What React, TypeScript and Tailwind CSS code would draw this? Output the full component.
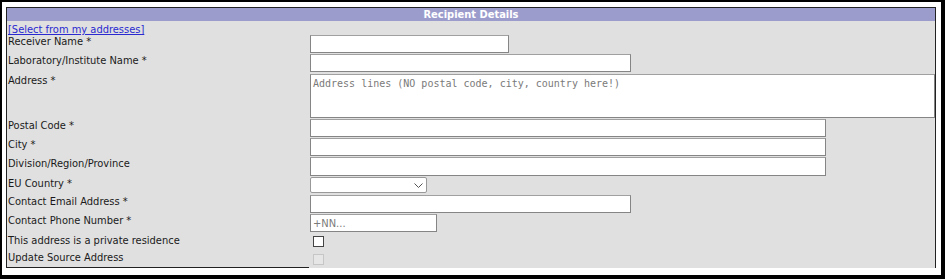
import React from "react";

const LABEL = "pl-px text-[11px] leading-[13px] text-[#1a1a1a] font-['DejaVu_Sans_Condensed','Liberation_Sans',Tahoma,sans-serif]";
const INPUT = "block h-[18px] border border-[#858585] border-t-[#a0a0a0] bg-white outline-none";

function Row({ label, height, children }: { label: string; height: string; children: React.ReactNode }) {
  return (
    <div className={`flex items-start ${height}`}>
      <div className={`w-[303px] shrink-0 ${LABEL}`}>{label}</div>
      <div className="flex-1">{children}</div>
    </div>
  );
}

export default function App() {
  return (
    <div className="w-[945px] h-[279px] bg-white border-black border-t-2 border-l-2 border-r-4 border-b-4 pt-[5px] pl-[4px]">
      <div className="w-[930px] border-t border-l border-r border-[#222]">
        {/* Header */}
        <div className="h-[13px] bg-[#9c9ccc] text-center text-[11px] leading-[13px] font-bold text-white font-['DejaVu_Sans_Condensed','Liberation_Sans',Tahoma,sans-serif]">
          Recipient Details
        </div>

        {/* Body */}
        <div className="bg-[#e0e0e0]">
          <div className="h-[14px] pl-px pt-px text-[11px] leading-[13px]">
            <a
              href="#"
              className="text-[#2a2ad0] underline font-['DejaVu_Sans_Condensed','Liberation_Sans',Tahoma,sans-serif]"
            >
              [Select from my addresses]
            </a>
          </div>

          <Row label="Receiver Name *" height="h-[19px]">
            <input className={`${INPUT} w-[199px]`} />
          </Row>
          <Row label="Laboratory/Institute Name *" height="h-[20px]">
            <input className={`${INPUT} w-[321px]`} />
          </Row>
          <Row label="Address *" height="h-[45px]">
            <textarea
              className="block h-[44px] w-[625px] resize-none border border-[#858585] border-t-[#a0a0a0] bg-white px-[2px] pt-[2px] text-[10px] leading-[13px] outline-none font-['DejaVu_Sans_Mono',monospace] placeholder:text-[#7a7a7a]"
              placeholder="Address lines (NO postal code, city, country here!)"
            />
          </Row>
          <Row label="Postal Code *" height="h-[19px]">
            <input className={`${INPUT} w-[516px]`} />
          </Row>
          <Row label="City *" height="h-[19px]">
            <input className={`${INPUT} w-[516px]`} />
          </Row>
          <Row label="Division/Region/Province" height="h-[20px]">
            <input className={`${INPUT} h-[19px] w-[516px]`} />
          </Row>
          <Row label="EU Country *" height="h-[18px]">
            <div className="relative h-[16px] w-[117px] rounded-[2px] border border-[#999] bg-white">
              <svg className="absolute left-[103px] top-[5px]" width="9" height="5" viewBox="0 0 9 5" fill="none">
                <path d="M0.5 0.5L4.5 4.5L8.5 0.5" stroke="#555" strokeWidth="1" />
              </svg>
            </div>
          </Row>
          <Row label="Contact Email Address *" height="h-[19px]">
            <input className={`${INPUT} w-[321px]`} />
          </Row>
          <Row label="Contact Phone Number *" height="h-[19px]">
            <input
              className={`${INPUT} w-[127px] px-[2px] text-[11px] font-['DejaVu_Sans_Condensed','Liberation_Sans',Tahoma,sans-serif] placeholder:text-[#7a7a7a]`}
              placeholder="+NN..."
            />
          </Row>
          <div className="flex h-[18px] items-start pt-px">
            <div className={`w-[303px] shrink-0 ${LABEL}`}>This address is a private residence</div>
            <span className="ml-[3px] mt-[2px] block h-[11px] w-[11px] border border-[#444] bg-white" />
          </div>
          <div className="flex h-[17px] items-start">
            <div className={`w-[303px] shrink-0 ${LABEL}`}>Update Source Address</div>
            <span className="ml-[3px] mt-[3px] block h-[11px] w-[11px] border border-[#c6c6c6] bg-[#e6e6e6]" />
          </div>
        </div>
      </div>
      <div className="-mt-px h-px w-[303px] bg-[#222]" />
    </div>
  );
}
